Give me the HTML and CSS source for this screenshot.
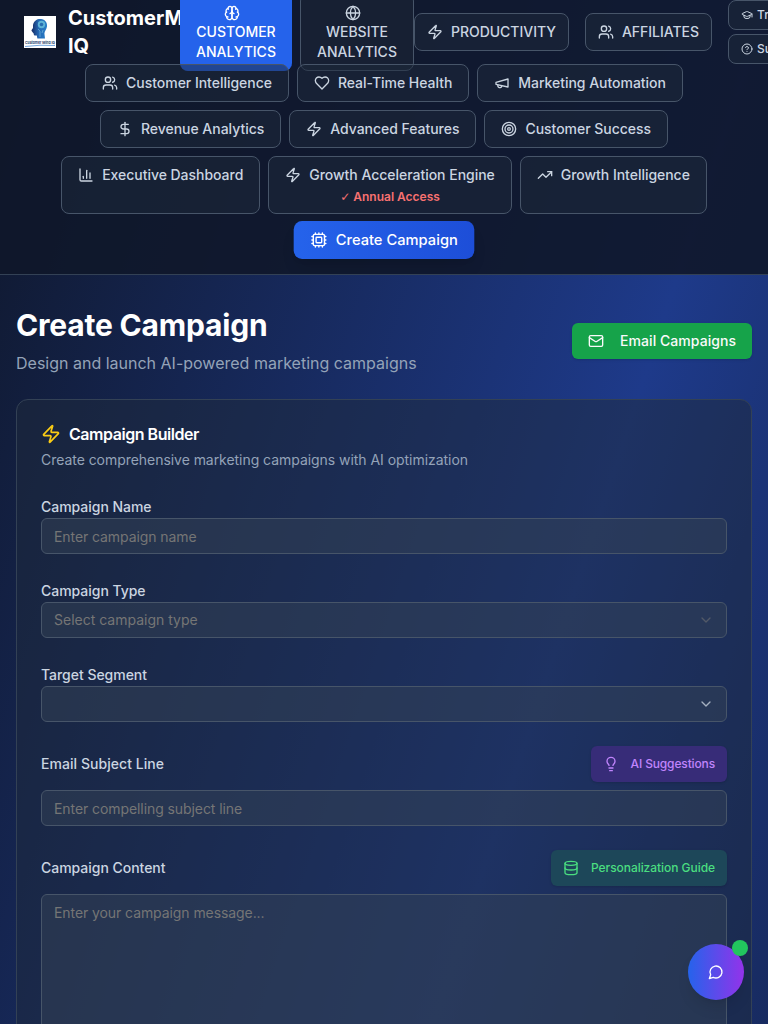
FILE: index.html
```html
<!DOCTYPE html>
<html lang="en">
<head>
<meta charset="utf-8">
<title>CustomerMind IQ - Create Campaign</title>
<link rel="stylesheet" href="styles.css">
</head>
<body>
<svg class="sprite" aria-hidden="true">
  <symbol id="brain" viewBox="0 0 24 24"><path d="M12 5a3 3 0 1 0-5.997.125 4 4 0 0 0-2.526 5.77 4 4 0 0 0 .556 6.588A4 4 0 1 0 12 18Z"/><path d="M12 5a3 3 0 1 1 5.997.125 4 4 0 0 1 2.526 5.77 4 4 0 0 1-.556 6.588A4 4 0 1 1 12 18Z"/><path d="M15 13a4.5 4.5 0 0 1-3-4 4.5 4.5 0 0 1-3 4"/><path d="M17.599 6.5a3 3 0 0 0 .399-1.375"/><path d="M6.003 5.125A3 3 0 0 0 6.401 6.5"/><path d="M3.477 10.896a4 4 0 0 1 .585-.396"/><path d="M19.938 10.5a4 4 0 0 1 .585.396"/><path d="M6 18a4 4 0 0 1-1.967-.516"/><path d="M19.967 17.484A4 4 0 0 1 18 18"/></symbol>
  <symbol id="globe" viewBox="0 0 24 24"><circle cx="12" cy="12" r="10"/><path d="M12 2a14.5 14.5 0 0 0 0 20 14.5 14.5 0 0 0 0-20"/><path d="M2 12h20"/></symbol>
  <symbol id="zap" viewBox="0 0 24 24"><path d="M4 14a1 1 0 0 1-.78-1.63l9.9-10.2a.5.5 0 0 1 .86.46l-1.92 6.02A1 1 0 0 0 13 10h7a1 1 0 0 1 .78 1.63l-9.9 10.2a.5.5 0 0 1-.86-.46l1.92-6.02A1 1 0 0 0 11 14z"/></symbol>
  <symbol id="users" viewBox="0 0 24 24"><path d="M16 21v-2a4 4 0 0 0-4-4H6a4 4 0 0 0-4 4v2"/><circle cx="9" cy="7" r="4"/><path d="M22 21v-2a4 4 0 0 0-3-3.87"/><path d="M16 3.13a4 4 0 0 1 0 7.75"/></symbol>
  <symbol id="cap" viewBox="0 0 24 24"><path d="M21.42 10.922a1 1 0 0 0-.019-1.838L12.83 5.18a2 2 0 0 0-1.66 0L2.6 9.08a1 1 0 0 0 0 1.832l8.57 3.908a2 2 0 0 0 1.66 0z"/><path d="M22 10v6"/><path d="M6 12.5V16a6 3 0 0 0 12 0v-3.5"/></symbol>
  <symbol id="help" viewBox="0 0 24 24"><circle cx="12" cy="12" r="10"/><path d="M9.09 9a3 3 0 0 1 5.83 1c0 2-3 3-3 3"/><path d="M12 17h.01"/></symbol>
  <symbol id="heart" viewBox="0 0 24 24"><path d="M19 14c1.49-1.46 3-3.21 3-5.5A5.5 5.5 0 0 0 16.5 3c-1.76 0-3 .5-4.5 2-1.5-1.5-2.74-2-4.5-2A5.5 5.5 0 0 0 2 8.5c0 2.3 1.5 4.05 3 5.5l7 7Z"/></symbol>
  <symbol id="megaphone" viewBox="0 0 24 24"><path d="m3 11 18-5v12L3 14v-3z"/><path d="M11.6 16.8a3 3 0 1 1-5.8-1.6"/></symbol>
  <symbol id="dollar" viewBox="0 0 24 24"><path d="M12 2v20"/><path d="M17 5H9.5a3.5 3.5 0 0 0 0 7h5a3.5 3.5 0 0 1 0 7H6"/></symbol>
  <symbol id="target" viewBox="0 0 24 24"><circle cx="12" cy="12" r="10"/><circle cx="12" cy="12" r="6"/><circle cx="12" cy="12" r="2"/></symbol>
  <symbol id="chart" viewBox="0 0 24 24"><path d="M3 3v16a2 2 0 0 0 2 2h16"/><path d="M18 17V9"/><path d="M13 17V5"/><path d="M8 17v-3"/></symbol>
  <symbol id="trend" viewBox="0 0 24 24"><path d="m22 7-8.5 8.5-5-5L2 17"/><path d="M16 7h6v6"/></symbol>
  <symbol id="cpu" viewBox="0 0 24 24"><rect x="4" y="4" width="16" height="16" rx="2"/><rect x="8" y="8" width="8" height="8" rx="1"/><path d="M12 20v2M12 2v2M17 20v2M17 2v2M2 12h2M2 17h2M2 7h2M20 12h2M20 17h2M20 7h2M7 20v2M7 2v2"/></symbol>
  <symbol id="mail" viewBox="0 0 24 24"><rect x="2" y="4" width="20" height="16" rx="2"/><path d="m22 7-8.97 5.7a1.94 1.94 0 0 1-2.06 0L2 7"/></symbol>
  <symbol id="chevron" viewBox="0 0 24 24"><path d="m6 9 6 6 6-6"/></symbol>
  <symbol id="bulb" viewBox="0 0 24 24"><path d="M15 14c.2-1 .7-1.7 1.5-2.5 1-.9 1.5-2.2 1.5-3.5A6 6 0 0 0 6 8c0 1 .2 2.2 1.5 3.5.7.7 1.3 1.5 1.5 2.5"/><path d="M9 18h6"/><path d="M10 22h4"/></symbol>
  <symbol id="database" viewBox="0 0 24 24"><ellipse cx="12" cy="5" rx="9" ry="3"/><path d="M3 5v14a9 3 0 0 0 18 0V5"/><path d="M3 12a9 3 0 0 0 18 0"/></symbol>
  <symbol id="message" viewBox="0 0 24 24"><path d="M7.9 20A9 9 0 1 0 4 16.1L2 22Z"/></symbol>
</svg>

<header class="header">
  <div class="topbar">
    <div class="brand">
      <svg class="logo" viewBox="0 0 32 32">
        <defs><linearGradient id="head" x1="0" y1="0" x2="1" y2="0"><stop offset="0" stop-color="#172a62"/><stop offset=".45" stop-color="#2468b4"/><stop offset="1" stop-color="#2a7fc8"/></linearGradient></defs>
        <rect width="32" height="32" fill="#fff"/>
        <path d="M9 9C10 4 14 2.500 17 3c4 .4 6.500 3.500 6 7.500-.4 3-2.400 4.500-2.600 7L21 22.500h-7.600l-.6-3c-2 .3-3.200 0-3-1.800L8 15.500l-.6-1.200L9 12z" fill="url(#head)"/>
        <circle cx="17.500" cy="8.500" r="3.700" fill="#5eb4d7"/><circle cx="17.500" cy="8.500" r="1.800" fill="#286db1"/>
        <path d="M14 13l2 2v6M19 14l-1 3" fill="none" stroke="#73b8dc" stroke-width=".7"/>
        <text class="logo-text" x="1" y="28" textLength="30" lengthAdjust="spacingAndGlyphs">Customer Mind IQ</text>
        <path d="M1 30.500Q16 28.500 31 29.500" fill="none" stroke="#4c8ed5" stroke-width=".8"/>
      </svg>
      <span class="brand-name">CustomerMind IQ</span>
    </div>
    <div class="topnav">
      <a class="tall tall-active"><span class="line"><svg class="icon"><use href="#brain"/></svg></span>CUSTOMER<br>ANALYTICS</a>
      <a class="tall"><span class="line"><svg class="icon"><use href="#globe"/></svg></span>WEBSITE<br>ANALYTICS</a>
    </div>
    <div class="actions">
      <a class="pill pill-compact"><svg class="icon"><use href="#zap"/></svg>PRODUCTIVITY</a>
      <a class="pill pill-compact"><svg class="icon"><use href="#users"/></svg>AFFILIATES</a>
      <div class="stack">
        <a class="mini"><svg class="icon icon-xs"><use href="#cap"/></svg>Training</a>
        <a class="mini"><svg class="icon icon-xs"><use href="#help"/></svg>Support</a>
      </div>
    </div>
  </div>
  <nav class="subnav">
    <a class="pill"><svg class="icon"><use href="#users"/></svg>Customer Intelligence</a>
    <a class="pill"><svg class="icon"><use href="#heart"/></svg>Real-Time Health</a>
    <a class="pill"><svg class="icon"><use href="#megaphone"/></svg>Marketing Automation</a>
    <i class="break"></i>
    <a class="pill"><svg class="icon"><use href="#dollar"/></svg>Revenue Analytics</a>
    <a class="pill"><svg class="icon"><use href="#zap"/></svg>Advanced Features</a>
    <a class="pill"><svg class="icon"><use href="#target"/></svg>Customer Success</a>
    <i class="break"></i>
    <a class="pill"><svg class="icon"><use href="#chart"/></svg>Executive Dashboard</a>
    <a class="pill pill-note"><span class="pill-row"><svg class="icon"><use href="#zap"/></svg>Growth Acceleration Engine</span><span class="note"><span class="check">✓</span> Annual Access</span></a>
    <a class="pill"><svg class="icon"><use href="#trend"/></svg>Growth Intelligence</a>
    <i class="break"></i>
    <a class="pill pill-active"><svg class="icon"><use href="#cpu"/></svg>Create Campaign</a>
  </nav>
</header>

<main class="main">
  <div class="page-head">
    <div>
      <h1 class="title">Create Campaign</h1>
      <p class="subtitle">Design and launch AI-powered marketing campaigns</p>
    </div>
    <button class="btn btn-green"><svg class="icon"><use href="#mail"/></svg>Email Campaigns</button>
  </div>

  <section class="card">
    <h2 class="card-title"><svg class="icon icon-lg"><use href="#zap"/></svg><span>Campaign Builder</span></h2>
    <p class="card-desc">Create comprehensive marketing campaigns with AI optimization</p>

    <form class="form">
      <div class="field">
        <label class="label">Campaign Name</label>
        <input class="control" placeholder="Enter campaign name">
      </div>
      <div class="field">
        <label class="label">Campaign Type</label>
        <div class="control select"><span>Select campaign type</span><svg class="icon dim"><use href="#chevron"/></svg></div>
      </div>
      <div class="field">
        <label class="label">Target Segment</label>
        <div class="control select"><span></span><svg class="icon lit"><use href="#chevron"/></svg></div>
      </div>
      <div class="field">
        <div class="label-row">
          <label class="label label-wide">Email Subject Line</label>
          <button type="button" class="btn btn-small btn-purple"><svg class="icon"><use href="#bulb"/></svg>AI Suggestions</button>
        </div>
        <input class="control" placeholder="Enter compelling subject line">
      </div>
      <div class="field">
        <div class="label-row">
          <label class="label">Campaign Content</label>
          <button type="button" class="btn btn-small btn-teal"><svg class="icon"><use href="#database"/></svg>Personalization Guide</button>
        </div>
        <textarea class="control area" placeholder="Enter your campaign message..."></textarea>
      </div>
    </form>
  </section>
</main>

<button class="chat"><svg class="icon"><use href="#message"/></svg><span class="dot"></span></button>
</body>
</html>
```

FILE: styles.css
```css
*, *::before, *::after { box-sizing: border-box; }
html { background: #0f172a; }
body {
  margin: 0;
  height: 1024px;
  overflow: hidden;
  font-family: Inter, "Liberation Sans", sans-serif;
  font-size: 16px;
  line-height: 24px;
  color: #fff;
  background: linear-gradient(to bottom right, #0f172a, #1e3a8a, #0f172a) 0 0 / 768px 2350px no-repeat;
}
h1, h2, p { margin: 0; }
button, input, textarea { font-family: inherit; }
.sprite { display: none; }
.icon {
  width: 16px;
  height: 16px;
  flex: none;
  fill: none;
  stroke: currentColor;
  stroke-width: 2;
  stroke-linecap: round;
  stroke-linejoin: round;
}
.icon-xs { width: 12px; height: 12px; }
.icon-lg { width: 20px; height: 20px; }

.header {
  height: 275px;
  border-bottom: 1px solid #334155;
  background: rgba(15, 23, 42, 0.9);
  overflow: hidden;
}
.topbar {
  display: flex;
  align-items: center;
  height: 64px;
  padding-left: 24px;
}
.brand {
  display: flex;
  align-items: center;
  gap: 12px;
  flex: none;
  width: 156px;
}
.logo { width: 32px; height: 32px; flex: none; }
.logo-text { font: 700 4px Inter, sans-serif; fill: #29426f; }
.brand-name { font-size: 20px; line-height: 28px; font-weight: 700; }
.topnav { position: relative; display: flex; flex: none; gap: 8px; }
.tall {
  width: 114px;
  padding: 8px 0;
  border: 1px solid #475569;
  border-radius: 8px;
  background: #172033;
  color: #cbd5e1;
  font-size: 14px;
  line-height: 20px;
  font-weight: 500;
  text-align: center;
}
.tall-active { width: 112px; border-width: 1px 0; border-color: #2563eb; background: #2563eb; color: #fff; }
.line { display: flex; height: 20px; align-items: center; justify-content: center; padding: 2px 8px 0 0; }
.actions { display: flex; align-items: center; flex: none; gap: 16px; }
.stack { display: flex; flex-direction: column; gap: 4px; }
.pill {
  display: flex;
  gap: 8px;
  flex: none;
  padding: 8px 16px;
  border: 1px solid #475569;
  border-radius: 8px;
  background: rgba(30, 41, 59, 0.5);
  color: #cbd5e1;
  font-size: 14px;
  line-height: 20px;
  font-weight: 500;
  letter-spacing: -0.03px;
  white-space: nowrap;
}
.pill > .icon, .pill-row > .icon { margin-top: 2px; }
.pill-compact { padding: 8px 12px; }
.mini {
  display: flex;
  align-items: center;
  gap: 4px;
  height: 30px;
  padding: 0 12px;
  border: 1px solid #475569;
  border-radius: 8px;
  background: rgba(30, 41, 59, 0.5);
  color: #cbd5e1;
  font-size: 12px;
  line-height: 16px;
  font-weight: 500;
}
.subnav {
  position: relative;
  display: flex;
  flex-wrap: wrap;
  justify-content: center;
  column-gap: 8px;
}
.break { flex: 0 0 100%; height: 8px; margin: 0 -4px; }
.pill-note { flex-direction: column; align-items: center; gap: 4px; }
.pill-row { display: flex; gap: 8px; }
.note { color: #f87171; font-size: 12px; line-height: 16px; height: 16px; font-weight: 600; letter-spacing: 0; }
.check { font-family: "DejaVu Sans", sans-serif; }
.pill-active {
  border: 0;
  color: #fff;
  letter-spacing: 0;
  background: linear-gradient(to right, #2563eb, #1d4ed8);
  box-shadow: 0 10px 15px -3px rgba(0, 0, 0, 0.1), 0 4px 6px -4px rgba(0, 0, 0, 0.1);
  transform: scale(1.05);
}

.main { padding: 32px 16px; }
.page-head { display: flex; align-items: center; justify-content: space-between; }
.title { font-size: 30px; line-height: 36px; font-weight: 700; letter-spacing: -0.19px; }
.subtitle { margin-top: 8px; color: #94a3b8; }
.btn {
  display: flex;
  align-items: center;
  height: 36px;
  gap: 16px;
  padding: 0 16px;
  border: 0;
  border-radius: 6px;
  font-size: 14px;
  line-height: 20px;
  font-weight: 500;
  box-shadow: 0 1px 3px rgba(0, 0, 0, 0.1), 0 1px 2px -1px rgba(0, 0, 0, 0.1);
}
.btn-green { background: #16a34a; color: #fafafa; letter-spacing: 0.05px; }
.btn-small { gap: 12px; padding: 0 12px; font-size: 12px; line-height: 16px; }
.btn-purple { background: #372c78; color: #c084fc; letter-spacing: -0.14px; }
.btn-teal { background: #1d4759; color: #4ade80; letter-spacing: -0.05px; }

.card {
  height: 900px;
  margin-top: 24px;
  padding: 24px;
  border: 1px solid #334155;
  border-radius: 12px;
  background: rgba(30, 41, 59, 0.5);
}
.card-title { display: flex; align-items: center; height: 20px; gap: 8px; font-size: 16px; line-height: 16px; font-weight: 600; letter-spacing: -0.46px; }
.card-title .icon { color: #facc15; }
.card-desc { margin-top: 6px; font-size: 14px; line-height: 20px; letter-spacing: -0.045px; color: #94a3b8; }
.form { display: flex; flex-direction: column; gap: 24px; margin-top: 24px; }
.field { display: flex; flex-direction: column; }
.label { font-size: 14px; line-height: 24px; font-weight: 500; letter-spacing: -0.03px; color: #cbd5e1; padding-top: 1px; height: 24px; }
.label-wide { letter-spacing: 0.05px; }
.label-row { display: flex; align-items: center; justify-content: space-between; margin-bottom: 8px; }
.label-row .label { padding-top: 0; }
.control {
  display: block;
  width: 100%;
  height: 36px;
  padding: 4px 12px;
  border: 1px solid #475569;
  border-radius: 6px;
  outline: 0;
  background: rgba(51, 65, 85, 0.5);
  color: #fff;
  font-size: 14px;
  line-height: 20px;
  letter-spacing: -0.08px;
}
.control::placeholder { color: #757575; }
.select { display: flex; align-items: center; justify-content: space-between; color: #757575; letter-spacing: 0; }
.dim { opacity: 0.55; }
.lit { color: #a5b0c0; }
.area { height: 260px; padding-top: 8px; resize: none; }

.chat {
  position: fixed;
  right: 24px;
  bottom: 24px;
  display: flex;
  align-items: center;
  justify-content: center;
  width: 56px;
  height: 56px;
  padding: 0;
  border: 0;
  border-radius: 50%;
  color: #fff;
  background: linear-gradient(to right, #2563eb, #9333ea);
  box-shadow: 0 10px 15px -3px rgba(0, 0, 0, 0.1), 0 4px 6px -4px rgba(0, 0, 0, 0.1);
}
.dot { position: absolute; top: -4px; right: -4px; width: 16px; height: 16px; border-radius: 50%; background: #22c55e; }
```
